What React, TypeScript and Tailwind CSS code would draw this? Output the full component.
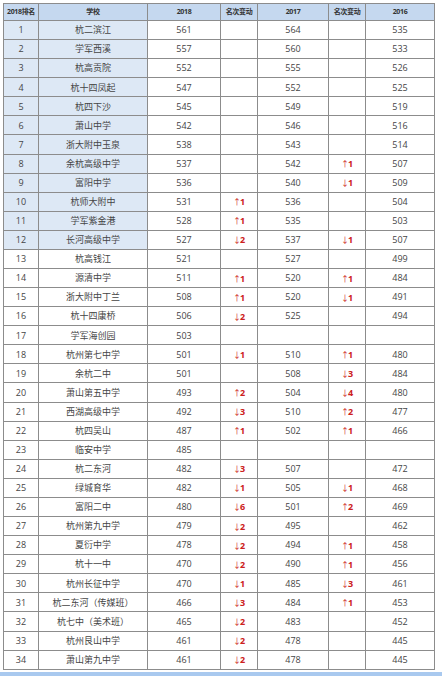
import React from 'react';

type Row = [number, string, string, string, string, string, string];

// rank, school, 2018, change, 2017, change, 2016
const rows: Row[] = [
  [1, '杭二滨江', '561', '', '564', '', '535'],
  [2, '学军西溪', '557', '', '560', '', '533'],
  [3, '杭高贡院', '552', '', '555', '', '526'],
  [4, '杭十四凤起', '547', '', '552', '', '525'],
  [5, '杭四下沙', '545', '', '549', '', '519'],
  [6, '萧山中学', '542', '', '546', '', '516'],
  [7, '浙大附中玉泉', '538', '', '543', '', '514'],
  [8, '余杭高级中学', '537', '', '542', 'u1', '507'],
  [9, '富阳中学', '536', '', '540', 'd1', '509'],
  [10, '杭师大附中', '531', 'u1', '536', '', '504'],
  [11, '学军紫金港', '528', 'u1', '535', '', '503'],
  [12, '长河高级中学', '527', 'd2', '537', 'd1', '507'],
  [13, '杭高钱江', '521', '', '527', '', '499'],
  [14, '源清中学', '511', 'u1', '520', 'u1', '484'],
  [15, '浙大附中丁兰', '508', 'u1', '520', 'd1', '491'],
  [16, '杭十四康桥', '506', 'd2', '525', '', '494'],
  [17, '学军海创园', '503', '', '', '', ''],
  [18, '杭州第七中学', '501', 'd1', '510', 'u1', '480'],
  [19, '余杭二中', '501', '', '508', 'd3', '484'],
  [20, '萧山第五中学', '493', 'u2', '504', 'd4', '480'],
  [21, '西湖高级中学', '492', 'd3', '510', 'u2', '477'],
  [22, '杭四吴山', '487', 'u1', '502', 'u1', '466'],
  [23, '临安中学', '485', '', '', '', ''],
  [24, '杭二东河', '482', 'd3', '507', '', '472'],
  [25, '绿城育华', '482', 'd1', '505', 'd1', '468'],
  [26, '富阳二中', '480', 'd6', '501', 'u2', '469'],
  [27, '杭州第九中学', '479', 'd2', '495', '', '462'],
  [28, '夏衍中学', '478', 'd2', '494', 'u1', '458'],
  [29, '杭十一中', '470', 'd2', '490', 'u1', '456'],
  [30, '杭州长征中学', '470', 'd1', '485', 'd3', '461'],
  [31, '杭二东河（传媒班）', '466', 'd3', '484', 'u1', '453'],
  [32, '杭七中（美术班）', '465', 'd2', '483', '', '452'],
  [33, '杭州艮山中学', '461', 'd2', '478', '', '445'],
  [34, '萧山第九中学', '461', 'd2', '478', '', '445'],
];

const gridCols = 'grid grid-cols-[35px_109px_73px_37px_71px_37px_69px]';
const cell = 'flex items-center justify-center whitespace-nowrap overflow-hidden border-r border-b border-[#8c8c8c]';

function Change({ v }: { v: string }) {
  if (!v) return null;
  const up = v[0] === 'u';
  return (
    <span className="text-[#cc2020] text-[9px] leading-none flex items-baseline">
      <span className="font-normal text-[8px] -mr-[1px]">{up ? '↑' : '↓'}</span>
      <span className="font-bold">{v.slice(1)}</span>
    </span>
  );
}

export default function App() {
  return (
    <div
      className="w-[442px] h-[676px] bg-white overflow-hidden text-[#454545]"
      style={{ fontFamily: '"Open Sans", "Noto Sans CJK SC", sans-serif' }}
    >
      <div className="ml-[3px] mt-[3px] w-[432px] border-l border-t border-[#8c8c8c]">
        {/* header */}
        <div className={`${gridCols} h-[17px] bg-[#c5d8ef] text-[7px] font-bold text-[#333] tracking-tighter`}>
          <div className={cell}>2018排名</div>
          <div className={cell}>学校</div>
          <div className={cell}>2018</div>
          <div className={cell}>名次变动</div>
          <div className={cell}>2017</div>
          <div className={cell}>名次变动</div>
          <div className={cell}>2016</div>
        </div>
        {rows.map((r) => {
          const hl = r[0] <= 12 ? 'bg-[#dde8f5]' : '';
          return (
            <div key={r[0]} className={`${gridCols} h-[19.09px] text-[9px]`}>
              <div className={`${cell} ${hl}`}>{r[0]}</div>
              <div className={`${cell} ${hl}`}>{r[1]}</div>
              <div className={cell}>{r[2]}</div>
              <div className={cell}><Change v={r[3]} /></div>
              <div className={cell}>{r[4]}</div>
              <div className={cell}><Change v={r[5]} /></div>
              <div className={cell}>{r[6]}</div>
            </div>
          );
        })}
      </div>
      <div className="mt-[2px] h-[10px] bg-[#a9c9ef]" />
    </div>
  );
}
